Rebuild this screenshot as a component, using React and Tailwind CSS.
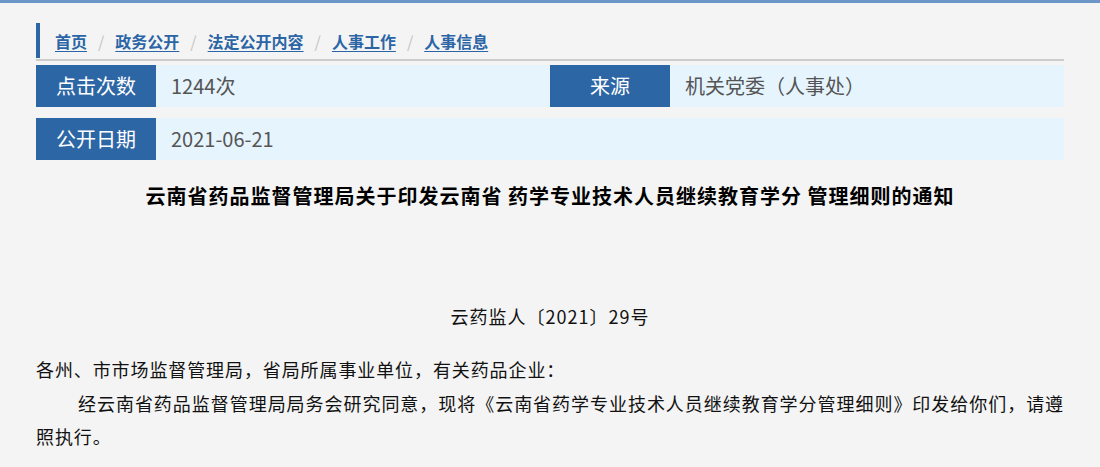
import React from "react";

const crumbs = ["首页", "政务公开", "法定公开内容", "人事工作", "人事信息"];

export default function App() {
  return (
    <div
      className="min-h-screen bg-[#f4f4f4] border-t-[3px] border-[#6b96c7] text-[#222]"
      style={{ fontFamily: '"Noto Sans CJK SC", "Noto Sans", sans-serif' }}
    >
      <div className="mx-[36px] pt-[20px]">
        {/* breadcrumb */}
        <div className="border-b-2 border-[#cccccc] pb-[1px]">
          <div className="h-[35px] border-l-4 border-[#2d66a5] flex items-center pl-[15px]">
            {crumbs.map((c, i) => (
              <React.Fragment key={c}>
                {i > 0 && (
                  <span className="mx-[11px] text-[16px] text-[#c4c4c4]">/</span>
                )}
                <a className="text-[16px] font-bold text-[#2b65a6] underline underline-offset-[3px] leading-none">
                  {c}
                </a>
              </React.Fragment>
            ))}
          </div>
        </div>

        {/* info rows */}
        <div className="mt-[4px] flex flex-col gap-[11px]">
          <div className="flex h-[42px] bg-[#e6f4fe]">
            <div className="flex w-1/2">
              <div className="w-[120px] bg-[#2d66a5] text-white text-[20px] flex items-center justify-center">
                点击次数
              </div>
              <div className="pl-[15px] flex items-center text-[20px] text-[#555]">1244次</div>
            </div>
            <div className="flex w-1/2">
              <div className="w-[120px] bg-[#2d66a5] text-white text-[20px] flex items-center justify-center">
                来源
              </div>
              <div className="pl-[15px] flex items-center text-[20px] text-[#555]">
                机关党委（人事处）
              </div>
            </div>
          </div>
          <div className="flex h-[42px] bg-[#e6f4fe]">
            <div className="w-[120px] bg-[#2d66a5] text-white text-[20px] flex items-center justify-center">
              公开日期
            </div>
            <div className="pl-[15px] flex items-center text-[20px] text-[#555]">2021-06-21</div>
          </div>
        </div>

        {/* title */}
        <h1 className="mt-[21px] text-center text-[20px] tracking-[1px] font-bold leading-[30px] text-black">
          云南省药品监督管理局关于印发云南省 药学专业技术人员继续教育学分 管理细则的通知
        </h1>

        {/* doc number */}
        <p className="mt-[90px] text-center text-[18px] tracking-[1px] leading-[30px] text-[#111]">
          云药监人〔2021〕29号
        </p>

        {/* body */}
        <div className="mt-[22px] text-[18px] tracking-[0.9px] leading-[33.5px] text-[#111] text-justify">
          <p>各州、市市场监督管理局，省局所属事业单位，有关药品企业：</p>
          <p className="indent-[42px]">
            经云南省药品监督管理局局务会研究同意，现将《云南省药学专业技术人员继续教育学分管理细则》印发给你们，请遵照执行。
          </p>
        </div>
      </div>
    </div>
  );
}
